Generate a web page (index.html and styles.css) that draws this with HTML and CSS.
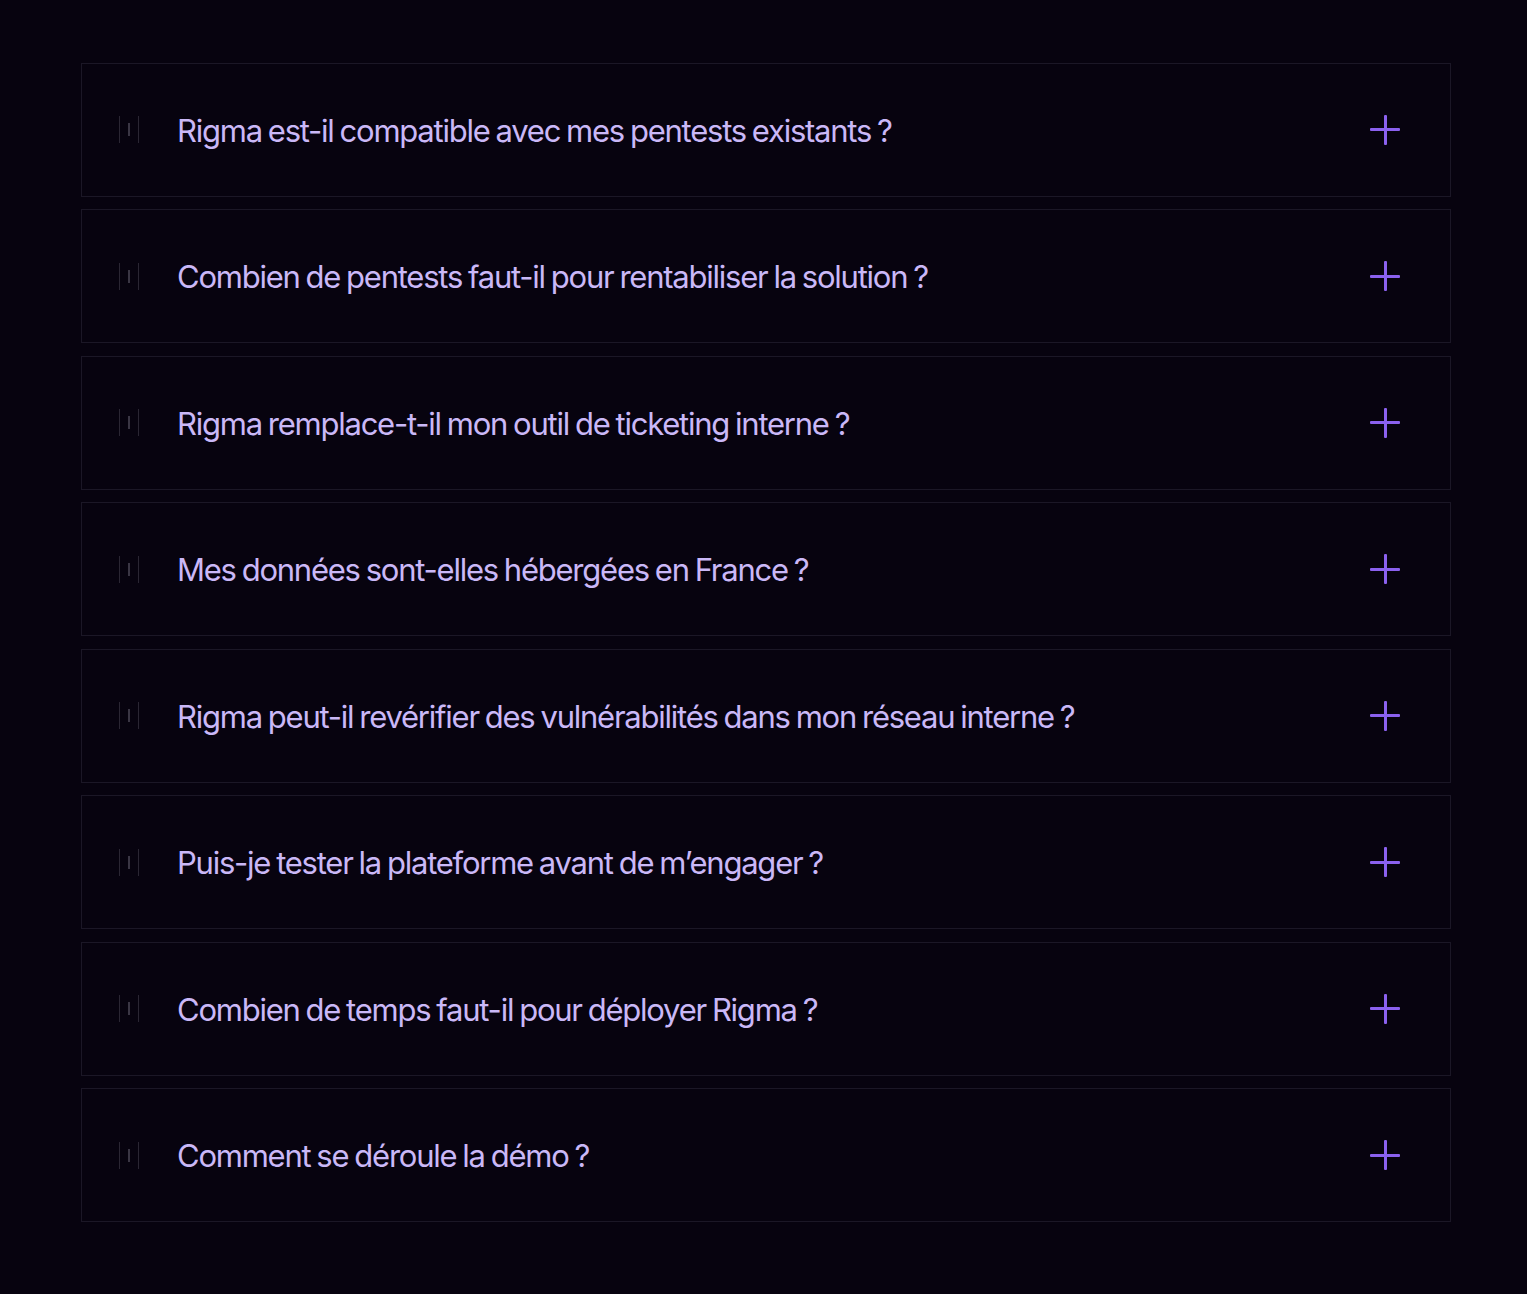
FILE: index.html
```html
<!DOCTYPE html>
<html lang="fr">
<head>
    <meta charset="UTF-8">
    <meta name="viewport" content="width=device-width, initial-scale=1.0">
    <title>FAQ - Rigma</title>
    <link rel="stylesheet" href="styles.css">
</head>
<body>
    <section class="faq">
        <div class="faq-item">
            <span class="faq-mark"><i></i><i></i><i></i></span>
            <h3 class="faq-question">Rigma est-il compatible avec mes pentests existants ?</h3>
            <span class="faq-toggle"></span>
        </div>
        <div class="faq-item">
            <span class="faq-mark"><i></i><i></i><i></i></span>
            <h3 class="faq-question">Combien de pentests faut-il pour rentabiliser la solution ?</h3>
            <span class="faq-toggle"></span>
        </div>
        <div class="faq-item">
            <span class="faq-mark"><i></i><i></i><i></i></span>
            <h3 class="faq-question">Rigma remplace-t-il mon outil de ticketing interne ?</h3>
            <span class="faq-toggle"></span>
        </div>
        <div class="faq-item">
            <span class="faq-mark"><i></i><i></i><i></i></span>
            <h3 class="faq-question">Mes données sont-elles hébergées en France ?</h3>
            <span class="faq-toggle"></span>
        </div>
        <div class="faq-item">
            <span class="faq-mark"><i></i><i></i><i></i></span>
            <h3 class="faq-question">Rigma peut-il revérifier des vulnérabilités dans mon réseau interne ?</h3>
            <span class="faq-toggle"></span>
        </div>
        <div class="faq-item">
            <span class="faq-mark"><i></i><i></i><i></i></span>
            <h3 class="faq-question">Puis-je tester la plateforme avant de m’engager ?</h3>
            <span class="faq-toggle"></span>
        </div>
        <div class="faq-item">
            <span class="faq-mark"><i></i><i></i><i></i></span>
            <h3 class="faq-question">Combien de temps faut-il pour déployer Rigma ?</h3>
            <span class="faq-toggle"></span>
        </div>
        <div class="faq-item">
            <span class="faq-mark"><i></i><i></i><i></i></span>
            <h3 class="faq-question">Comment se déroule la démo ?</h3>
            <span class="faq-toggle"></span>
        </div>
    </section>
</body>
</html>
```

FILE: styles.css
```css
* {
    margin: 0;
    padding: 0;
    box-sizing: border-box;
}

body {
    background: #07030f;
    font-family: Inter, 'Noto Sans', sans-serif;
    min-height: 100vh;
}

.faq {
    display: flex;
    flex-direction: column;
    gap: 12.9px;
    width: 1370px;
    margin-left: 81px;
    padding-top: 63px;
}

.faq-item {
    display: flex;
    align-items: center;
    height: 133.6px;
    border: 1px solid #1b1726;
    padding: 0 50px 0 37px;
}

.faq-mark {
    display: flex;
    align-items: center;
    justify-content: space-between;
    width: 20px;
    height: 27px;
    margin-right: 38px;
}

.faq-mark i {
    display: block;
    width: 1px;
    height: 27px;
    background: #2a2633;
}

.faq-mark i:nth-child(2) {
    width: 2px;
    height: 13px;
    background: #3a3644;
}

.faq-question {
    flex: 1;
    color: #cab8f7;
    font-size: 31px;
    font-weight: 400;
    line-height: 1.3;
    letter-spacing: -0.04em;
    word-spacing: -1.5px;
    padding-top: 2px;
}

.faq-toggle {
    position: relative;
    width: 30px;
    height: 30px;
}

.faq-toggle::before,
.faq-toggle::after {
    content: '';
    position: absolute;
    background: #8b61ef;
    border-radius: 1px;
}

.faq-toggle::before {
    left: 0;
    right: 0;
    top: 13.5px;
    height: 3px;
}

.faq-toggle::after {
    top: 0;
    bottom: 0;
    left: 13.5px;
    width: 3px;
}
```
